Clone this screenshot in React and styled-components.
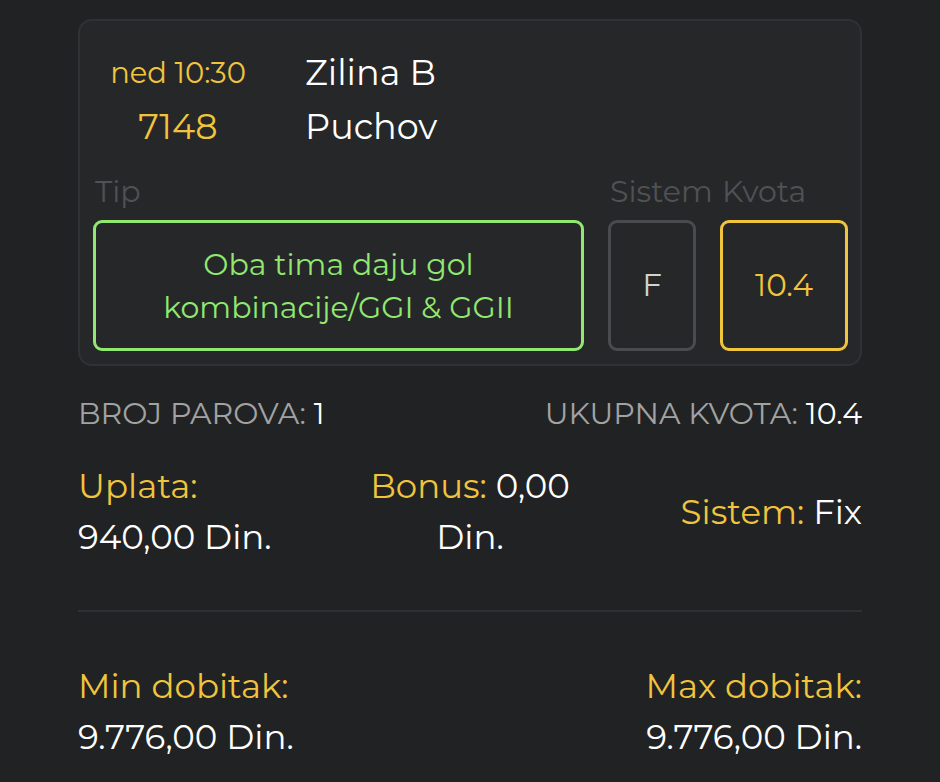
import React from 'react';
import styled, { createGlobalStyle } from 'styled-components';

const GlobalStyle = createGlobalStyle`
  html, body {
    margin: 0;
    padding: 0;
    background: #212224;
  }
  body {
    font-family: Montserrat, "Open Sans", "Noto Sans", sans-serif;
  }
`;

const YELLOW = '#f0c43c';
const GREEN = '#90e86f';

function App() {
  return (
    <Page>
      <GlobalStyle />
      <Card>
        <Match>
          <TimeCol>
            <Time>ned 10:30</Time>
            <Code>7148</Code>
          </TimeCol>
          <Teams>
            <Team>Zilina B</Team>
            <Team>Puchov</Team>
          </Teams>
        </Match>
        <BetGrid>
          <Label>Tip</Label>
          <Label>Sistem</Label>
          <Label>Kvota</Label>
          <Box $color={GREEN} $text={GREEN} $size={30}>
            Oba tima daju gol
            <br />
            kombinacije/GGI &amp; GGII
          </Box>
          <Box $color="#4a4b4e" $text="#d2d2d2">F</Box>
          <Box $color={YELLOW} $text={YELLOW}>10.4</Box>
        </BetGrid>
      </Card>

      <SummaryRow>
        <Muted>
          BROJ PAROVA: <White>1</White>
        </Muted>
        <Muted>
          UKUPNA KVOTA: <White>10.4</White>
        </Muted>
      </SummaryRow>

      <StakeRow>
        <Stat>
          <Gold>Uplata:</Gold>
          <White>940,00 Din.</White>
        </Stat>
        <Stat $align="center">
          <span>
            <Gold>Bonus:</Gold> <White>0,00</White>
          </span>
          <White>Din.</White>
        </Stat>
        <Stat $align="right" $middle>
          <span>
            <Gold>Sistem:</Gold> <White>Fix</White>
          </span>
        </Stat>
      </StakeRow>

      <Divider />

      <WinRow>
        <Stat>
          <Gold>Min dobitak:</Gold>
          <White>9.776,00 Din.</White>
        </Stat>
        <Stat $align="right">
          <Gold>Max dobitak:</Gold>
          <White>9.776,00 Din.</White>
        </Stat>
      </WinRow>
    </Page>
  );
}

const Page = styled.div`
  width: 784px;
  margin: 0 auto;
  padding-top: 19px;
  color: #fff;
`;

const Card = styled.div`
  background: #262729;
  border: 2px solid #303134;
  border-radius: 14px;
  padding: 26px 12px 13px 13px;
`;

const Match = styled.div`
  display: flex;
  align-items: center;
  height: 106px;
`;

const TimeCol = styled.div`
  width: 170px;
  display: flex;
  flex-direction: column;
  align-items: center;
`;

const Time = styled.div`
  color: ${YELLOW};
  font-size: 29px;
  line-height: 54px;
`;

const Code = styled.div`
  color: ${YELLOW};
  font-size: 35px;
  line-height: 54px;
`;

const Teams = styled.div`
  margin-left: 42px;
  display: flex;
  flex-direction: column;
`;

const Team = styled.div`
  font-size: 35px;
  line-height: 54px;
`;

const BetGrid = styled.div`
  display: grid;
  grid-template-columns: 491px 88px 128px;
  column-gap: 24px;
  margin-top: 19px;
`;

const Label = styled.div`
  color: #505154;
  font-size: 30px;
  line-height: 40px;
  padding-left: 2px;
  margin-bottom: 8px;
  white-space: nowrap;
`;

const Box = styled.div`
  height: 131px;
  box-sizing: border-box;
  border: 3px solid ${(p) => p.$color};
  border-radius: 9px;
  color: ${(p) => p.$text};
  display: flex;
  align-items: center;
  justify-content: center;
  text-align: center;
  font-size: ${(p) => p.$size || 31}px;
  line-height: 43px;
  white-space: nowrap;
`;

const SummaryRow = styled.div`
  display: flex;
  justify-content: space-between;
  margin-top: 31px;
  font-size: 30px;
  line-height: 34px;
`;

const Muted = styled.span`
  color: #a2a2a2;
`;

const White = styled.span`
  color: #fff;
`;

const Gold = styled.span`
  color: ${YELLOW};
`;

const StakeRow = styled.div`
  display: grid;
  grid-template-columns: 1fr 1fr 1fr;
  margin-top: 30px;
`;

const Stat = styled.div`
  display: flex;
  flex-direction: column;
  justify-content: ${(p) => (p.$middle ? 'center' : 'flex-start')};
  align-items: ${(p) =>
    p.$align === 'center' ? 'center' : p.$align === 'right' ? 'flex-end' : 'flex-start'};
  font-size: 34px;
  line-height: 51px;
  white-space: nowrap;
`;

const Divider = styled.div`
  height: 2px;
  background: #2f3033;
  margin-top: 47px;
`;

const WinRow = styled.div`
  display: flex;
  justify-content: space-between;
  margin-top: 49px;
`;

export default App;
